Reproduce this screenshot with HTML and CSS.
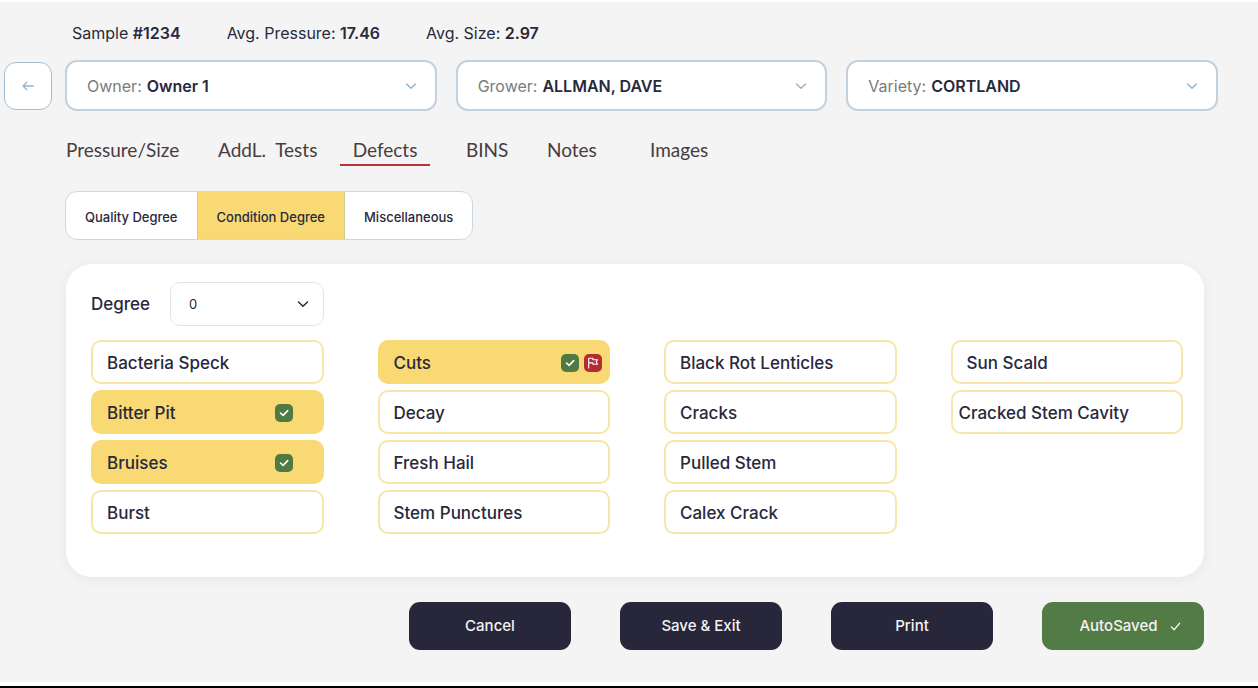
FILE: index.html
```html
<!DOCTYPE html>
<html lang="en">
<head>
<meta charset="utf-8">
<meta name="viewport" content="width=device-width, initial-scale=1">
<title>Sample #1234</title>
<link rel="stylesheet" href="styles.css">
</head>
<body>
<svg class="sprite" aria-hidden="true">
  <symbol id="chevron" viewBox="0 0 12 12"><path d="M1.5 4 6 8.3 10.5 4"/></symbol>
  <symbol id="tick" viewBox="0 0 18 18"><path d="m5.5 9 2.6 2.4 4.6-4.8"/></symbol>
  <symbol id="flag" viewBox="0 0 18 18"><path d="M4.7 14V4.3h4.2v1.5h4.6l-1.3 2.1 1.3 2.3H9V8.9H4.7"/></symbol>
</svg>
<main class="page">
  <div class="stats">
    <span>Sample <b>#1234</b></span>
    <span>Avg. Pressure: <b>17.46</b></span>
    <span>Avg. Size: <b>2.97</b></span>
  </div>

  <div class="toolbar">
    <button class="back" type="button" aria-label="Back">
      <svg viewBox="0 0 12 12"><path d="M11.3 6H1.2M4.8 2.2 1 6l3.8 3.8"/></svg>
    </button>
    <div class="filters">
      <div class="filter">
        <label for="owner">Owner:</label>
        <select id="owner"><option>Owner 1</option></select>
        <svg class="chevron"><use href="#chevron"/></svg>
      </div>
      <div class="filter">
        <label for="grower">Grower:</label>
        <select id="grower"><option>ALLMAN, DAVE</option></select>
        <svg class="chevron"><use href="#chevron"/></svg>
      </div>
      <div class="filter">
        <label for="variety">Variety:</label>
        <select id="variety"><option>CORTLAND</option></select>
        <svg class="chevron"><use href="#chevron"/></svg>
      </div>
    </div>
  </div>

  <nav class="tabs">
    <a href="#">Pressure/Size</a>
    <a href="#">AddL.&nbsp; Tests</a>
    <a class="active" href="#" aria-current="page">Defects</a>
    <a href="#">BINS</a>
    <a href="#">Notes</a>
    <a href="#">Images</a>
  </nav>

  <div class="segments">
    <button type="button">Quality Degree</button>
    <button type="button" class="active">Condition Degree</button>
    <button type="button">Miscellaneous</button>
  </div>

  <section class="card">
    <div class="degree">
      <label for="degree">Degree</label>
      <div class="degree-box">
        <select id="degree"><option>0</option></select>
        <svg class="chevron"><use href="#chevron"/></svg>
      </div>
    </div>
    <div class="defects">
      <button type="button" class="defect">Bacteria Speck</button>
      <button type="button" class="defect selected" aria-pressed="true">Bitter Pit
        <span class="marks"><svg class="mark"><use href="#tick"/></svg></span></button>
      <button type="button" class="defect selected" aria-pressed="true">Bruises
        <span class="marks"><svg class="mark"><use href="#tick"/></svg></span></button>
      <button type="button" class="defect">Burst</button>
      <button type="button" class="defect selected" aria-pressed="true">Cuts
        <span class="marks"><svg class="mark"><use href="#tick"/></svg><svg class="mark flagged"><use href="#flag"/></svg></span></button>
      <button type="button" class="defect">Decay</button>
      <button type="button" class="defect">Fresh Hail</button>
      <button type="button" class="defect">Stem Punctures</button>
      <button type="button" class="defect">Black Rot Lenticles</button>
      <button type="button" class="defect">Cracks</button>
      <button type="button" class="defect">Pulled Stem</button>
      <button type="button" class="defect">Calex Crack</button>
      <button type="button" class="defect">Sun Scald</button>
      <button type="button" class="defect wide">Cracked Stem Cavity</button>
    </div>
  </section>

  <div class="actions">
    <button type="button">Cancel</button>
    <button type="button">Save &amp; Exit</button>
    <button type="button">Print</button>
    <button type="button" class="saved">AutoSaved
      <svg viewBox="0 0 12 12"><path d="m1.5 6.5 3 3 6-7"/></svg></button>
  </div>
</main>
</body>
</html>
```
FILE: styles.css
```css
* { box-sizing: border-box; }

body {
  margin: 0;
  padding: 2px 0 4px;
  min-height: 100vh;
  display: flex;
  flex-direction: column;
  background: #fff;
  border-bottom: 2px solid #000;
  color: #29283d;
  font: 16px/24px Inter, "Liberation Sans", sans-serif;
}

button, select { font: inherit; color: inherit; }
button { cursor: pointer; }

select {
  appearance: none;
  border: 0;
  padding: 0;
  background: transparent;
  flex: 1;
  min-width: 0;
}

svg {
  fill: none;
  stroke: currentColor;
  stroke-linecap: round;
  stroke-linejoin: round;
  flex: none;
}

.sprite { position: absolute; width: 0; height: 0; }
.chevron { width: 12px; height: 12px; stroke-width: 1.5; pointer-events: none; }

.page {
  flex: 1;
  background: #f4f4f4;
  padding: 19px 40px 30px 4px;
}

.stats {
  display: flex;
  gap: 46px;
  padding-left: 68px;
}
.stats b { font-weight: 600; }

.toolbar {
  display: flex;
  align-items: center;
  gap: 13px;
  margin-top: 15px;
}

.back {
  width: 48px;
  height: 48px;
  padding: 0;
  display: flex;
  align-items: center;
  justify-content: center;
  border: 1px solid #a5bdd1;
  border-radius: 12px;
  background: #fff;
  color: #97b4cb;
}
.back svg { width: 12px; height: 12px; stroke-width: 1.3; }

.filters {
  flex: 1;
  display: grid;
  grid-template-columns: repeat(3, 1fr);
  gap: 19px;
}

.filter {
  height: 51px;
  display: flex;
  align-items: center;
  gap: 5px;
  padding: 0 18px 0 20px;
  border: 2px solid #c3d1dd;
  border-radius: 12px;
  background: #fff;
}
.filter label { color: #7b7b7b; }
.filter select { font-weight: 600; }
.filter .chevron { color: #97b4cb; }

.tabs {
  display: grid;
  grid-template-columns: 152px 122px 126px 81px 103px auto;
  margin: 25px 0 0 62px;
  font: 19px/28px Lato, "Open Sans", sans-serif;
}
.tabs a {
  justify-self: start;
  color: #463d40;
  text-decoration: none;
  border-bottom: 2px solid transparent;
}
.tabs .active {
  width: 90px;
  text-align: center;
  border-color: #b8343b;
}

.segments {
  display: inline-flex;
  margin: 25px 0 0 61px;
  border: 1px solid #cbd7e1;
  border-radius: 12px;
  background: #fff;
  overflow: hidden;
}
.segments button {
  height: 47px;
  padding: 3px 19px 0;
  border: 0;
  background: transparent;
  font-size: 13px;
  font-weight: 500;
}
.segments .active {
  background: #f8d974;
  border: solid #c8cb9a;
  border-width: 0 1px;
}

.card {
  margin: 24px 14px 0 62px;
  padding: 18px 21px 43px 25px;
  border-radius: 26px;
  background: #fff;
  box-shadow: 0 2px 14px rgba(0, 0, 0, 0.06);
}

.degree {
  display: flex;
  align-items: center;
  gap: 20px;
  font-size: 17px;
  font-weight: 500;
}
.degree-box {
  width: 154px;
  height: 44px;
  display: flex;
  align-items: center;
  padding: 0 14px 0 18px;
  border: 1px solid #dfe5ec;
  border-radius: 10px;
  font-size: 13px;
  font-weight: 400;
}

.defects {
  display: grid;
  grid-auto-flow: column;
  grid-template-rows: repeat(4, 44px);
  grid-auto-columns: 1fr;
  gap: 6px 54px;
  margin-top: 14px;
}
.defect {
  display: flex;
  align-items: center;
  justify-content: space-between;
  padding: 1px 6px 0 14px;
  border: 2px solid #f8e5a8;
  border-radius: 10px;
  background: #fff;
  font-size: 17px;
  font-weight: 500;
  text-align: left;
  white-space: nowrap;
}
.defect.selected { background: #f8d974; border-color: #f8d974; }
.defect.wide { padding-left: 6px; }

.marks { display: flex; gap: 5px; width: 41px; }
.mark {
  width: 18px;
  height: 18px;
  border-radius: 5px;
  background: #4f7b42;
  color: #fff;
  stroke-width: 1.6;
}
.mark.flagged { background: #b12d30; stroke-width: 1.1; }

.actions {
  display: flex;
  justify-content: flex-end;
  gap: 49px;
  margin: 25px 14px 0 0;
}
.actions button {
  width: 162px;
  height: 48px;
  display: flex;
  align-items: center;
  justify-content: center;
  gap: 12px;
  border: 0;
  border-radius: 11px;
  background: #27263b;
  color: #f4f4f4;
  font-size: 15px;
  font-weight: 500;
}
.actions .saved { background: #537b45; padding-left: 20px; }
.actions svg { width: 11px; height: 11px; stroke-width: 1.4; }
```
